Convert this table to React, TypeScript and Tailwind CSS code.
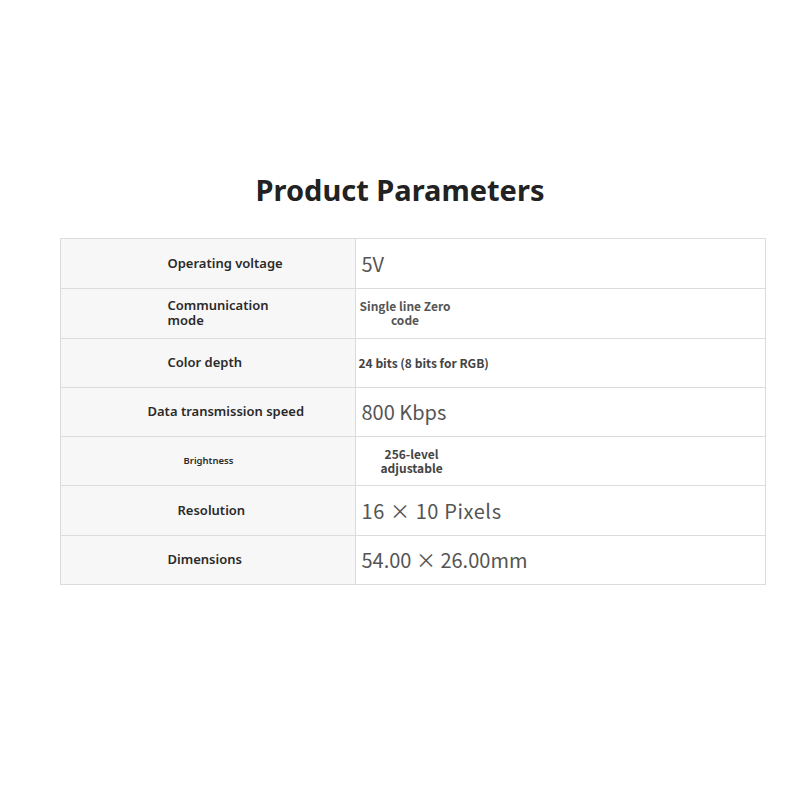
import React from 'react';

type Row = {
  label: string;
  labelClass: string;
  value: React.ReactNode;
  valueClass: string;
};

const ROWS: Row[] = [
  {
    label: 'Operating voltage',
    labelClass: 'pl-[107px] text-[13px]',
    value: '5V',
    valueClass: 'pl-[6px] text-[20px] font-normal text-[#555]',
  },
  {
    label: 'Communication\nmode',
    labelClass: 'pl-[107px] text-[13px] leading-[15px] whitespace-pre-line',
    value: (
      <span className="inline-block text-center leading-[14px]">
        Single line Zero
        <br />
        code
      </span>
    ),
    valueClass: 'pl-[4px] text-[12px] font-semibold text-[#555]',
  },
  {
    label: 'Color depth',
    labelClass: 'pl-[107px] text-[13px]',
    value: '24 bits (8 bits for RGB)',
    valueClass: 'pl-[3px] text-[12px] font-semibold text-[#444]',
  },
  {
    label: 'Data transmission speed',
    labelClass: 'pl-[87px] text-[13px]',
    value: '800 Kbps',
    valueClass: 'pl-[6px] text-[20px] font-normal text-[#555]',
  },
  {
    label: 'Brightness',
    labelClass: 'pl-[123px] text-[9.5px]',
    value: (
      <span className="inline-block text-center leading-[14px]">
        256-level
        <br />
        adjustable
      </span>
    ),
    valueClass: 'pl-[25px] text-[12px] font-semibold text-[#444]',
  },
  {
    label: 'Resolution',
    labelClass: 'pl-[117px] text-[13px]',
    value: '16 × 10 Pixels',
    valueClass: 'pl-[6px] text-[20px] font-normal tracking-[0.6px] text-[#555]',
  },
  {
    label: 'Dimensions',
    labelClass: 'pl-[107px] text-[13px]',
    value: '54.00 × 26.00mm',
    valueClass: 'pl-[6px] text-[20px] font-normal text-[#555]',
  },
];

export default function App() {
  return (
    <div className="flex h-[800px] w-[800px] flex-col items-center bg-white font-['Noto_Sans',sans-serif] text-[#2a2a2a]">
      <h1 className="mt-[170px] text-[29px] font-bold leading-[40px] text-[#222]">Product Parameters</h1>

      <div className="mt-[28px] ml-[25px] w-[706px] border border-[#dcdcdc]">
        {ROWS.map((row, i) => (
          <div
            key={row.label}
            className={`grid h-[49.3px] grid-cols-[295px_1fr] ${i > 0 ? 'border-t border-[#dcdcdc]' : ''}`}
          >
            <div className={`flex items-center border-r border-[#dcdcdc] bg-[#f7f7f7] font-semibold text-[#2a2a2a] ${row.labelClass}`}>
              {row.label}
            </div>
            <div
              className={`flex items-center bg-white font-['Noto_Sans_CJK_SC','Noto_Sans',sans-serif] ${row.valueClass}`}
            >
              {row.value}
            </div>
          </div>
        ))}
      </div>
    </div>
  );
}
